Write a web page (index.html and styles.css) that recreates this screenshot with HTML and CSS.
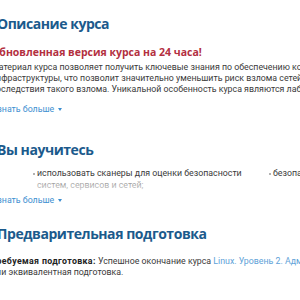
FILE: index.html
```html
<html>
<head>
    <title>Описание курса</title>
    <link rel="stylesheet" href="styles.css">
</head>
<body>
    <section class="course">
        <h2 class="title first">Описание курса</h2>
        <h3 class="news">Обновленная версия курса на 24 часа!</h3>
        <p class="about">Материал курса позволяет получить ключевые знания по обеспечению компьютерной безопасности<br>инфраструктуры, что позволит значительно уменьшить риск взлома сетей и свести к минимуму<br>последствия такого взлома. Уникальной особенность курса являются лабораторные работы.</p>
        <a class="more" href="#">Узнать больше <span class="arrow"></span></a>

        <h2 class="title">Вы научитесь</h2>
        <div class="fold">
            <ul class="skills">
                <li>использовать сканеры для оценки безопасности систем, сервисов и сетей;</li>
                <li>безопасно администрировать несколько серверов;</li>
            </ul>
        </div>
        <a class="more" href="#">Узнать больше <span class="arrow"></span></a>

        <h2 class="title last">Предварительная подготовка</h2>
        <p class="prep"><b>Требуемая подготовка:</b> Успешное окончание курса <a href="#">Linux. Уровень 2. Администрирование сервисов и сетей</a><br>или эквивалентная подготовка.</p>
    </section>
</body>
</html>
```

FILE: styles.css
```css
body {
    margin: 0;
    font-family: Roboto, sans-serif;
    color: #3a3a3a;
    overflow: hidden;
}
.course {
    margin-left: -9px;
    width: 560px;
}
.title {
    font-family: "Open Sans", sans-serif;
    font-size: 14px;
    font-weight: 700;
    letter-spacing: -0.45px;
    color: #1b5a8c;
    margin: 25px 0 0 6px;
    line-height: 20px;
}
.title.first {
    margin-top: 14px;
}
.title.last {
    margin-top: 18px;
}
.news {
    font-family: "Open Sans", sans-serif;
    font-size: 10.5px;
    font-weight: 700;
    color: #b3303f;
    margin: 11px 0 0 0;
    line-height: 14px;
}
.about, .prep {
    font-size: 8.8px;
    line-height: 11px;
    margin: 3px 0 0 0;
    white-space: nowrap;
}
.more {
    display: block;
    font-size: 8.8px;
    line-height: 12px;
    color: #3d8fd1;
    text-decoration: none;
    margin-top: 8px;
    padding-left: 1px;
}
.arrow {
    display: inline-block;
    border-left: 2.5px solid transparent;
    border-right: 2.5px solid transparent;
    border-top: 3px solid #3d8fd1;
    vertical-align: middle;
    margin-left: 2px;
}
.fold {
    position: relative;
    height: 24px;
    overflow: hidden;
    margin-top: 7px;
}
.fold + .more {
    margin-top: 3px;
}
.fold::after {
    content: "";
    position: absolute;
    left: 0;
    right: 0;
    bottom: 0;
    height: 12px;
    background: linear-gradient(rgba(255,255,255,0.4), rgba(255,255,255,0.75));
}
.skills {
    display: grid;
    grid-template-columns: 236px 236px;
    list-style: none;
    padding: 0 0 0 46px;
    margin: 0;
    font-size: 8.8px;
    line-height: 12px;
}
.skills li {
    position: relative;
    padding-right: 8px;
}
.skills li::before {
    content: "";
    position: absolute;
    left: -4px;
    top: 6px;
    width: 2px;
    height: 2px;
    border-radius: 50%;
    background: #999;
}
.prep {
    margin-top: 12px;
}
.prep a {
    color: #5ea2d8;
    text-decoration: none;
}
.prep b {
    color: #222;
    letter-spacing: 0.35px;
}
```
